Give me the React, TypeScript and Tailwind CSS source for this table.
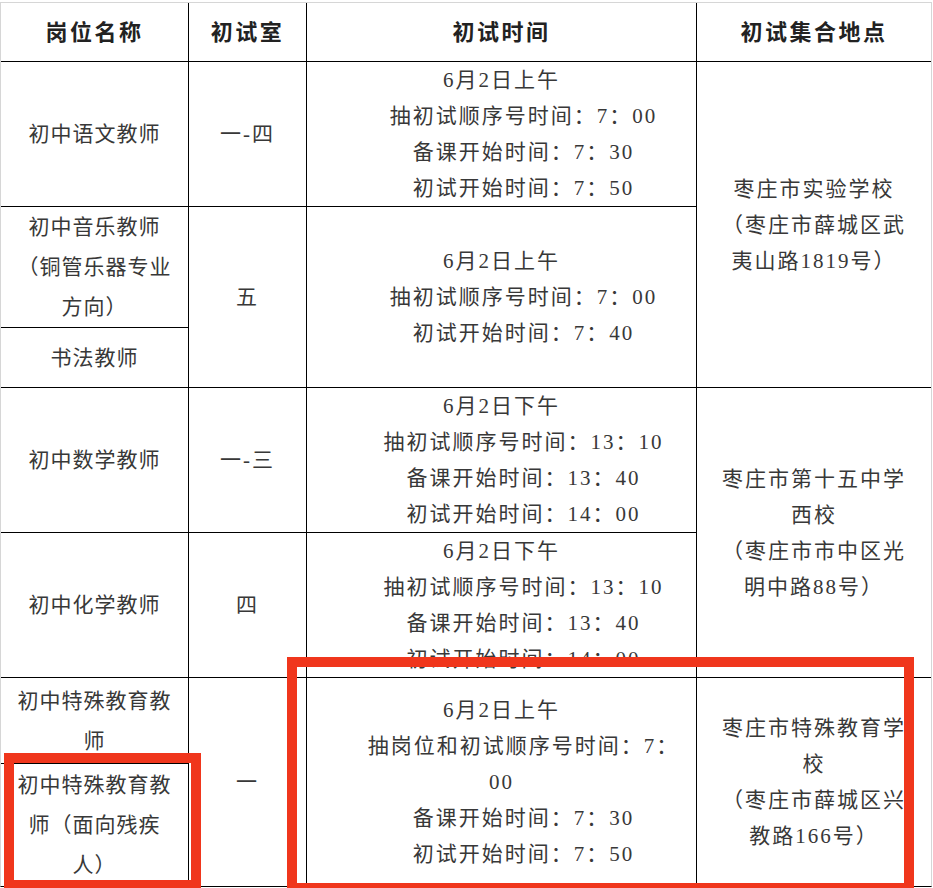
import React from "react";

type Line = { t: string; indent?: boolean };

const L = (t: string): Line => ({ t });
const I = (t: string): Line => ({ t, indent: true });

function Cell({
  pos,
  lines,
  lead = "leading-[36px]",
  track = "tracking-[2px]",
}: {
  pos: string;
  lines: Line[];
  lead?: string;
  track?: string;
}) {
  return (
    <div
      className={`${pos} flex flex-col items-center justify-center bg-white text-center text-[21px] text-[#383838] ${lead} ${track}`}
    >
      {lines.map((l, i) => (
        <div key={i} className={`whitespace-nowrap ${l.indent ? "indent-[44px]" : ""}`}>
          {l.t}
        </div>
      ))}
    </div>
  );
}

function Head({ pos, text }: { pos: string; text: string }) {
  return (
    <div
      className={`${pos} flex items-center justify-center bg-white text-[22px] font-bold tracking-[2.5px] text-[#222]`}
    >
      {text}
    </div>
  );
}

export default function App() {
  return (
    <div className="relative h-[888px] w-[933px] overflow-hidden bg-white pt-[2px] font-['Liberation_Serif','Noto_Sans_CJK_SC',serif]">
      <div className="grid w-[932px] grid-cols-[187px_117px_389px_234px] grid-rows-[58px_144px_120px_59px_144px_144px_85px_122px] gap-px border border-[#d6d6d6] border-b-black bg-black">
        <Head pos="col-start-1 row-start-1" text="岗位名称" />
        <Head pos="col-start-2 row-start-1" text="初试室" />
        <Head pos="col-start-3 row-start-1" text="初试时间" />
        <Head pos="col-start-4 row-start-1" text="初试集合地点" />

        {/* 岗位名称 */}
        <Cell pos="col-start-1 row-start-2" lead="leading-[40px]" track="tracking-[1px]" lines={[L("初中语文教师")]} />
        <Cell
          pos="col-start-1 row-start-3"
          lead="leading-[40px]"
          track="tracking-[1px]"
          lines={[L("初中音乐教师"), L("（铜管乐器专业"), L("方向）")]}
        />
        <Cell pos="col-start-1 row-start-4" lead="leading-[40px]" track="tracking-[1px]" lines={[L("书法教师")]} />
        <Cell pos="col-start-1 row-start-5" lead="leading-[40px]" track="tracking-[1px]" lines={[L("初中数学教师")]} />
        <Cell pos="col-start-1 row-start-6" lead="leading-[40px]" track="tracking-[1px]" lines={[L("初中化学教师")]} />
        <Cell
          pos="col-start-1 row-start-7"
          lead="leading-[40px]"
          track="tracking-[1px]"
          lines={[L("初中特殊教育教"), L("师")]}
        />
        <Cell
          pos="col-start-1 row-start-8"
          lead="leading-[40px]"
          track="tracking-[1px]"
          lines={[L("初中特殊教育教"), L("师（面向残疾"), L("人）")]}
        />

        {/* 初试室 */}
        <Cell pos="col-start-2 row-start-2" lines={[L("一-四")]} />
        <Cell pos="col-start-2 row-start-3 row-span-2" lines={[L("五")]} />
        <Cell pos="col-start-2 row-start-5" lines={[L("一-三")]} />
        <Cell pos="col-start-2 row-start-6" lines={[L("四")]} />
        <Cell pos="col-start-2 row-start-7 row-span-2" lines={[L("一")]} />

        {/* 初试时间 */}
        <Cell
          pos="col-start-3 row-start-2"
          lines={[L("6月2日上午"), I("抽初试顺序号时间：7：00"), I("备课开始时间：7：30"), I("初试开始时间：7：50")]}
        />
        <Cell
          pos="col-start-3 row-start-3 row-span-2"
          lines={[L("6月2日上午"), I("抽初试顺序号时间：7：00"), I("初试开始时间：7：40")]}
        />
        <Cell
          pos="col-start-3 row-start-5"
          lines={[L("6月2日下午"), I("抽初试顺序号时间：13：10"), I("备课开始时间：13：40"), I("初试开始时间：14：00")]}
        />
        <Cell
          pos="col-start-3 row-start-6"
          lines={[L("6月2日下午"), I("抽初试顺序号时间：13：10"), I("备课开始时间：13：40"), I("初试开始时间：14：00")]}
        />
        <Cell
          pos="col-start-3 row-start-7 row-span-2"
          lines={[
            L("6月2日上午"),
            I("抽岗位和初试顺序号时间：7："),
            L("00"),
            I("备课开始时间：7：30"),
            I("初试开始时间：7：50"),
          ]}
        />

        {/* 初试集合地点 */}
        <Cell
          pos="col-start-4 row-start-2 row-span-3"
          lines={[L("枣庄市实验学校"), L("（枣庄市薛城区武"), L("夷山路1819号）")]}
        />
        <Cell
          pos="col-start-4 row-start-5 row-span-2"
          lines={[L("枣庄市第十五中学"), L("西校"), L("（枣庄市市中区光"), L("明中路88号）")]}
        />
        <Cell
          pos="col-start-4 row-start-7 row-span-2"
          lines={[L("枣庄市特殊教育学"), L("校"), L("（枣庄市薛城区兴"), L("教路166号）")]}
        />
      </div>

      {/* red highlight boxes drawn over the table */}
      <div className="pointer-events-none absolute left-[4px] top-[753px] h-[137px] w-[197px] border-[10px] border-[#f0361c]" />
      <div className="pointer-events-none absolute left-[287px] top-[657px] h-[236px] w-[627px] border-[10px] border-[#f0361c]" />
    </div>
  );
}
